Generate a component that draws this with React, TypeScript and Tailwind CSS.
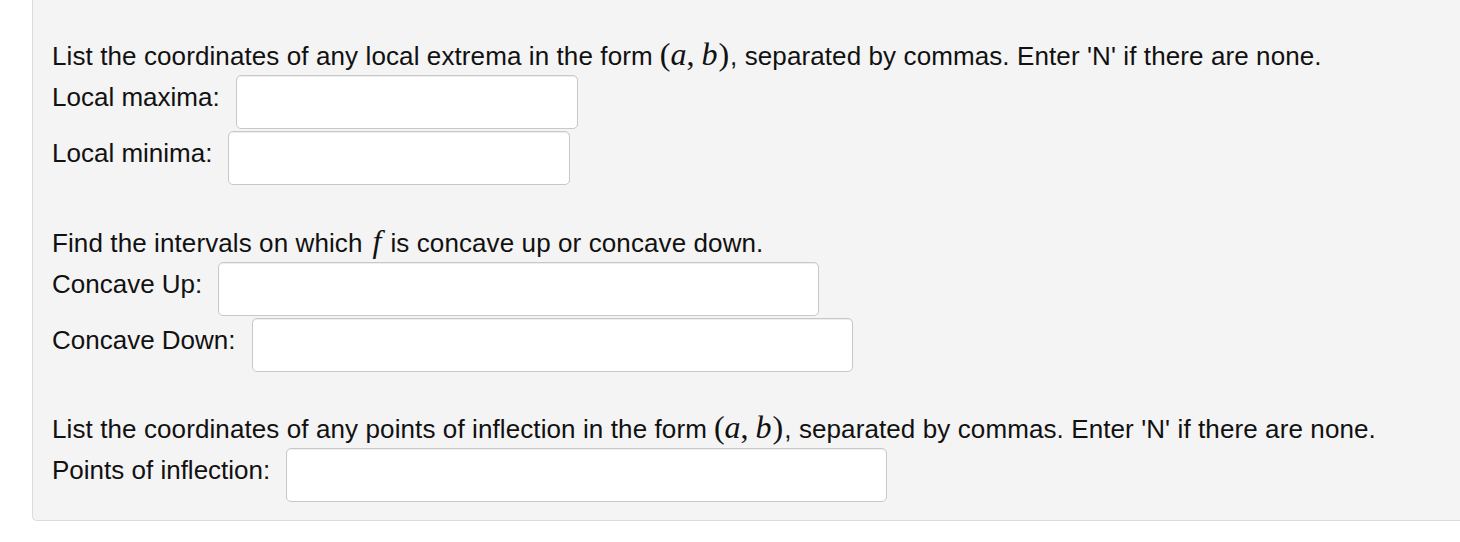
import React from "react";

function Pair() {
  return (
    <span className="font-['Liberation_Serif',serif] text-[32px] leading-[24px] tracking-normal ml-[7px] mr-[1px]">
      (<i>a</i>,<i className="ml-[7px] mr-[1px]">b</i>)
    </span>
  );
}

function Row({ label, width }: { label: string; width: string }) {
  return (
    <div className="flex items-center h-[54px]">
      <span className="pb-[11px]">{label}</span>
      <input
        type="text"
        className={`ml-[16px] h-[54px] ${width} bg-white border border-[#c8c8c8] rounded-[5px] shadow-[inset_0_1px_1px_rgba(0,0,0,0.075)] outline-none`}
      />
    </div>
  );
}

export default function App() {
  return (
    <div className="w-full h-[542px] bg-white font-['Liberation_Sans',Arial,sans-serif] text-[26px] leading-[32px] text-[#111]">
      <div className="ml-[32px] bg-[#f4f4f4] border-l border-b border-[#dcdcdc] rounded-bl-[5px] pl-[19px] pt-[40px] pb-[18px]">
        <p className="whitespace-nowrap tracking-[0.1px]">
          List the coordinates of any local extrema in the form<Pair />, separated by commas. Enter 'N' if there are none.
        </p>
        <div className="mt-[3px] flex flex-col gap-[2px]">
          <Row label="Local maxima:" width="w-[342px]" />
          <Row label="Local minima:" width="w-[342px]" />
        </div>

        <p className="mt-[42px] whitespace-nowrap tracking-[0.1px]">
          Find the intervals on which
          <i className="font-['Liberation_Serif',serif] text-[32px] leading-[24px] tracking-normal ml-[10px] mr-[9px]">f</i>is concave up or concave down.
        </p>
        <div className="mt-[3px] flex flex-col gap-[2px]">
          <Row label="Concave Up:" width="w-[601px]" />
          <Row label="Concave Down:" width="w-[601px]" />
        </div>

        <p className="mt-[41px] whitespace-nowrap tracking-[0.1px]">
          List the coordinates of any points of inflection in the form<Pair />, separated by commas. Enter 'N' if there are none.
        </p>
        <div className="mt-[3px]">
          <Row label="Points of inflection:" width="w-[601px]" />
        </div>
      </div>
    </div>
  );
}
